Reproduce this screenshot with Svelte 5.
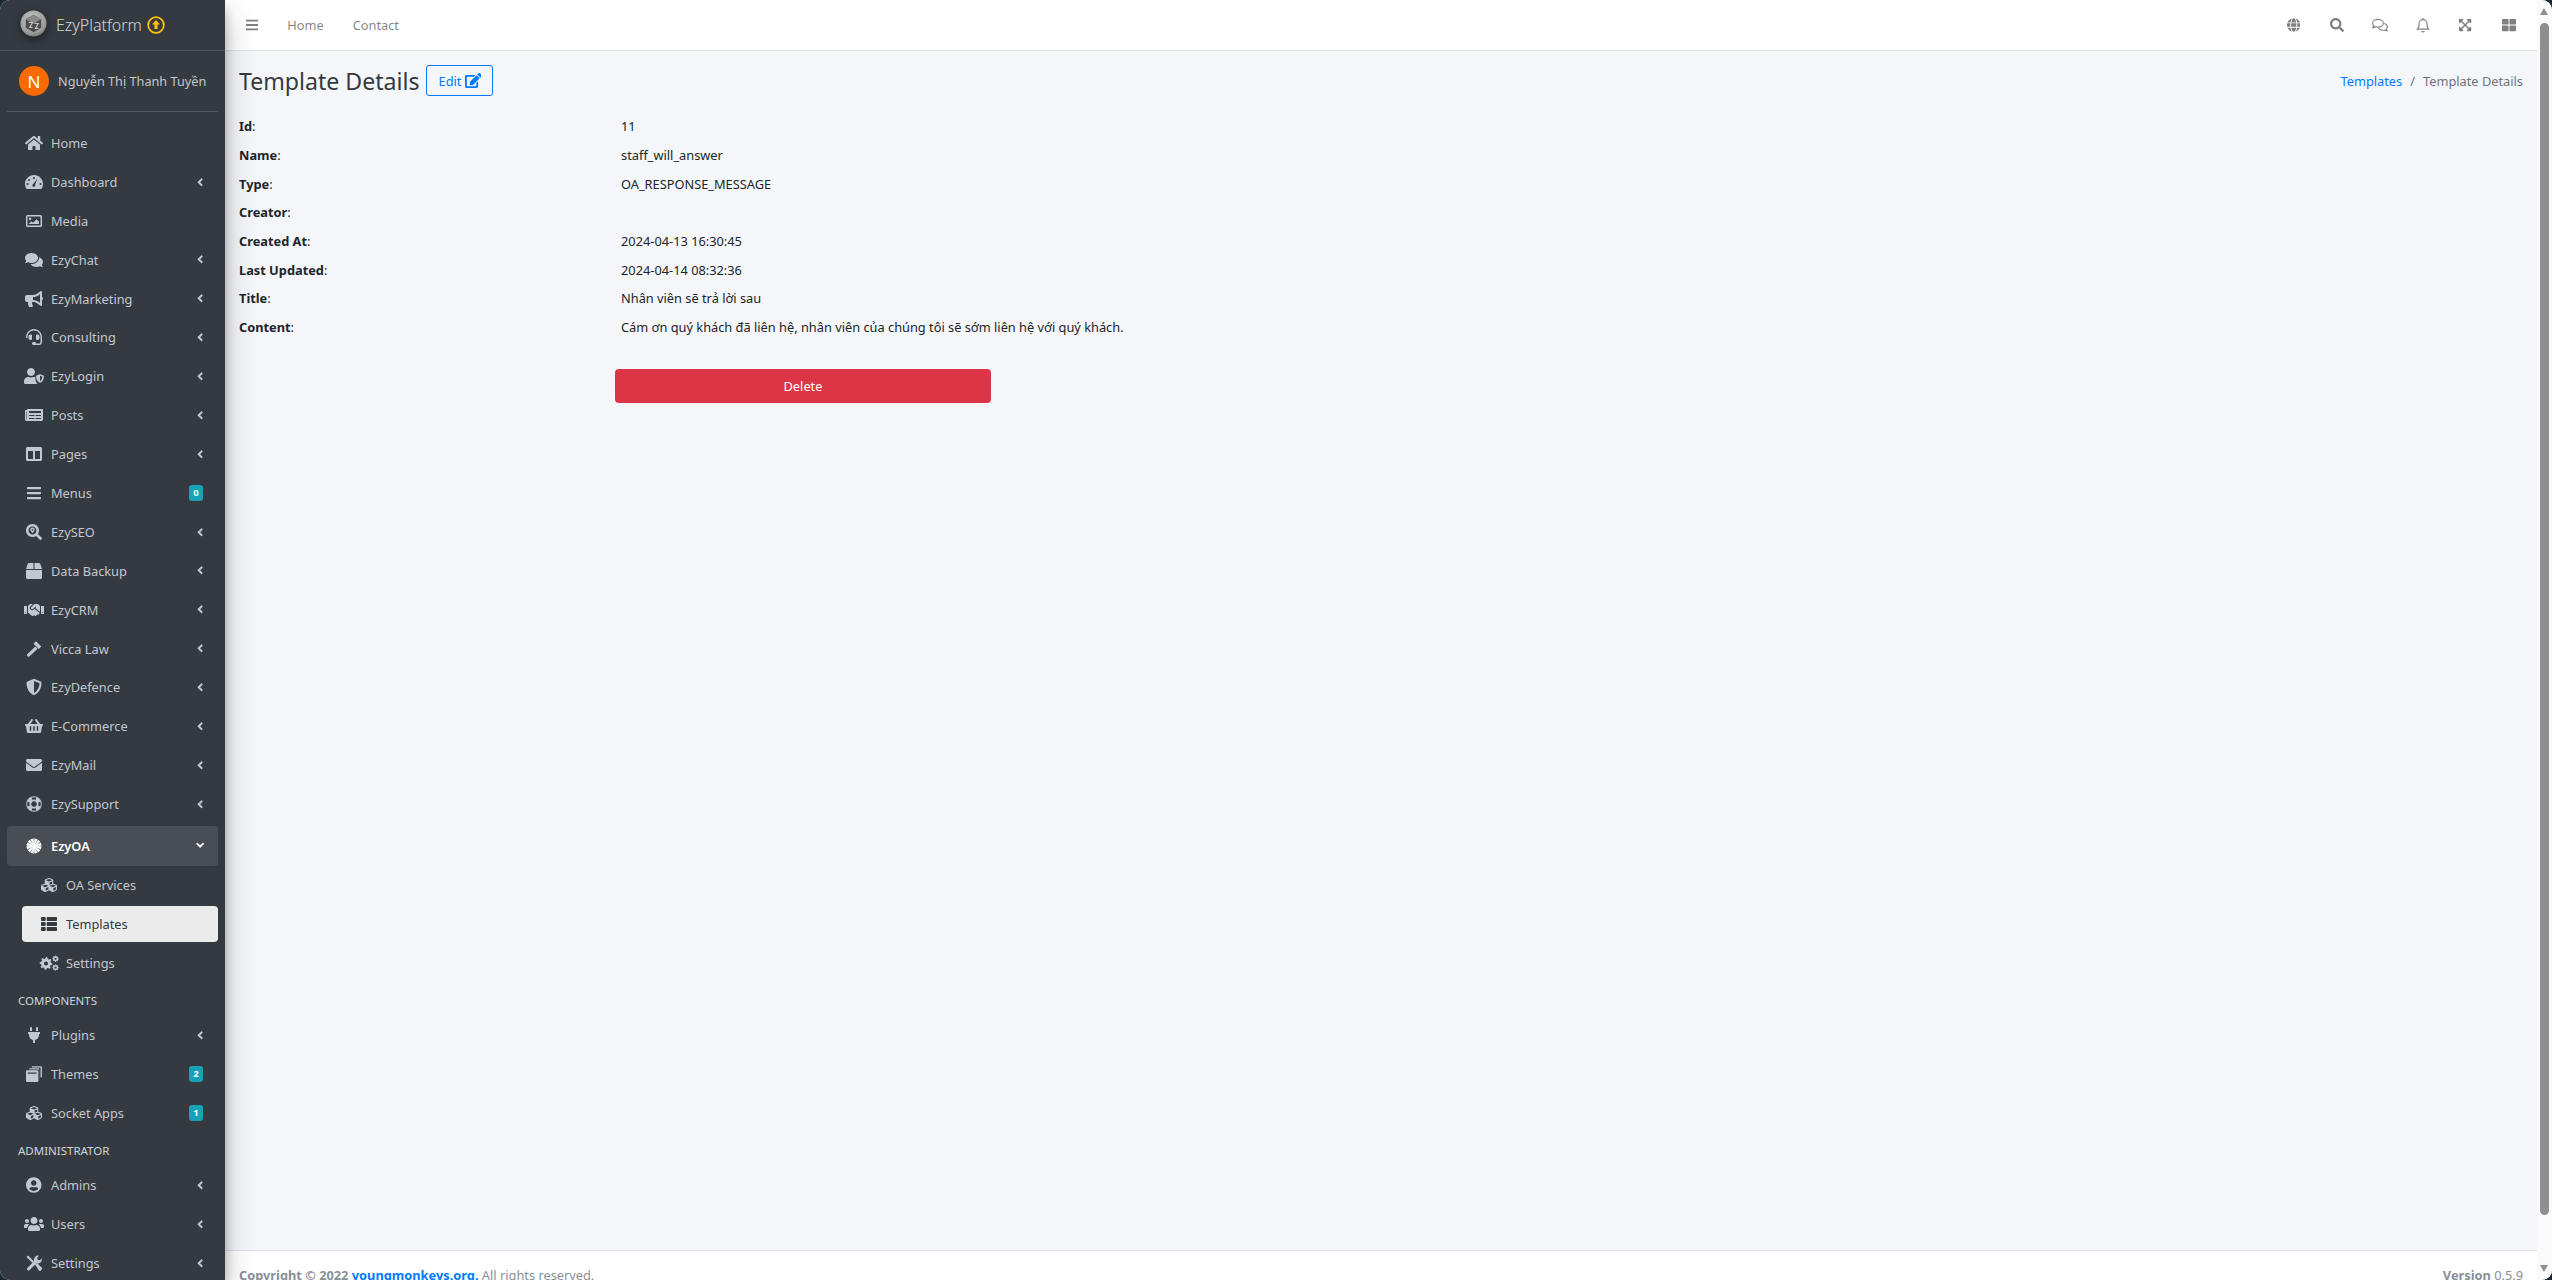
<script>
  // icon paths: [viewBox width, d, fill rule]
  function spokes() {
    let d = 'M256 16a240 240 0 1 0 .1 0z';
    for (let i = 0; i < 12; i++) {
      const a = (i * Math.PI) / 6;
      const p = (r, o) => `${(256 + r * Math.cos(a + o)).toFixed(1)} ${(256 + r * Math.sin(a + o)).toFixed(1)}`;
      d += `M${p(60, 0)}L${p(235, 0.05)}L${p(235, -0.05)}z`;
    }
    return d;
  }

  function gear(cx, cy, r, teeth) {
    const pts = [];
    for (let i = 0; i < teeth * 4; i++) {
      const a = (i * Math.PI * 2) / (teeth * 4);
      const rad = i % 4 < 2 ? r : r * 0.76;
      pts.push(`${(cx + rad * Math.cos(a)).toFixed(1)} ${(cy + rad * Math.sin(a)).toFixed(1)}`);
    }
    const h = r * 0.32;
    return `M${pts.join('L')}zM${cx} ${cy - h}a${h} ${h} 0 1 0 .1 0z`;
  }

  const solid = {
    home: [576, 'M280.37 148.26L96 300.11V464a16 16 0 0 0 16 16l112.06-.29a16 16 0 0 0 15.92-16V368a16 16 0 0 1 16-16h64a16 16 0 0 1 16 16v95.64a16 16 0 0 0 16 16.05L464 480a16 16 0 0 0 16-16V300L295.67 148.26a12.19 12.19 0 0 0-15.3 0zM571.6 251.47L488 182.56V44.05a12 12 0 0 0-12-12h-56a12 12 0 0 0-12 12v72.61L318.47 43a48 48 0 0 0-61 0L4.34 251.47a12 12 0 0 0-1.6 16.9l25.5 31A12 12 0 0 0 45.15 301l235.22-193.74a12.19 12.19 0 0 1 15.3 0L530.9 301a12 12 0 0 0 16.9-1.6l25.5-31a12 12 0 0 0-1.7-16.93z'],
    gauge: [576, 'M288 32C129 32 0 161 0 320c0 53 14 102 40 144 6 9 16 16 28 16h440c12 0 22-7 28-16 26-42 40-91 40-144 0-159-129-288-288-288zM288 96a32 32 0 1 0 .1 0zM128 160a32 32 0 1 0 .1 0zM80 288a32 32 0 1 0 .1 0zM496 288a32 32 0 1 0 .1 0zM400 140l-76 196a48 48 0 1 1-62-18z'],
    image: [512, 'M48 64h416a48 48 0 0 1 48 48v288a48 48 0 0 1-48 48H48a48 48 0 0 1-48-48V112a48 48 0 0 1 48-48zM48 112v288h416V112zM128 144a40 40 0 1 0 .1 0zM96 352h320v-72l-80-80-112 112-48-48-80 72z'],
    comments: [576, 'M416 192c0-88.4-93.1-160-208-160S0 103.6 0 192c0 34.3 14.1 65.9 38 92-13.4 30.2-35.5 54.2-35.8 54.5-2.2 2.3-2.8 5.7-1.5 8.7S4.8 352 8 352c36.6 0 66.9-12.3 88.7-25 32.2 15.7 70.3 25 111.3 25 114.9 0 208-71.6 208-160zm122 220c23.9-26 38-57.7 38-92 0-66.9-53.5-124.2-129.3-148.1.9 6.6 1.3 13.3 1.3 20.1 0 105.9-107.7 192-240 192-10.8 0-21.3-.8-31.7-1.9C207.8 439.6 281.8 480 368 480c41 0 79.1-9.2 111.3-25 21.8 12.7 52.1 25 88.7 25 3.2 0 6.1-1.9 7.3-4.8 1.3-2.9.7-6.3-1.5-8.7-.3-.3-22.4-24.2-35.8-54.5z'],
    bullhorn: [576, 'M576 240c0-23.63-12.95-44.04-32-55.12V32.01C544 23.26 537.02 0 512 0c-7.12 0-14.19 2.38-19.98 7.02l-85.03 68.03C364.28 109.19 310.66 128 256 128H64c-35.35 0-64 28.65-64 64v96c0 35.35 28.65 64 64 64h33.7c-1.39 10.48-2.18 21.14-2.18 32 0 39.77 9.26 77.35 25.56 110.94 5.19 10.69 16.52 17.06 28.4 17.06h74.28c26.05 0 41.69-29.84 25.9-50.56-16.4-21.52-26.15-48.36-26.15-77.44 0-11.11 1.62-21.79 4.41-32H256c54.66 0 108.28 18.81 150.98 52.95l85.03 68.03a32.023 32.023 0 0 0 19.98 7.02c24.92 0 32-22.78 32-32V295.13C563.05 284.04 576 263.63 576 240zm-96 141.42l-33.05-26.44C392.95 311.78 325.12 288 256 288v-96c69.12 0 136.95-23.78 190.95-66.98L480 98.58v282.84z'],
    headset: [512, 'M192 208c0-17.67-14.33-32-32-32h-16c-35.35 0-64 28.65-64 64v48c0 35.35 28.65 64 64 64h16c17.67 0 32-14.33 32-32V208zm176 144c35.35 0 64-28.65 64-64v-48c0-35.35-28.65-64-64-64h-16c-17.67 0-32 14.33-32 32v112c0 17.67 14.33 32 32 32h16zM256 0C113.18 0 4.58 118.83 0 256v16c0 8.84 7.16 16 16 16h16c8.84 0 16-7.16 16-16v-16c0-114.69 93.31-208 208-208s208 93.31 208 208h-.12c.08 2.43.12 165.72.12 165.72 0 23.35-18.93 42.28-42.28 42.28H320c0-26.51-21.49-48-48-48h-32c-26.51 0-48 21.49-48 48s21.49 48 48 48h181.72c49.86 0 90.28-40.42 90.28-90.28V256C507.42 118.83 398.82 0 256 0z'],
    userShield: [640, 'M224 0a128 128 0 1 0 .1 0zM313.6 288h-16.7c-22.2 10.2-46.9 16-72.9 16s-50.6-5.8-72.9-16h-16.7C60.2 288 0 348.2 0 422.4V464c0 26.5 21.5 48 48 48h352c10 0 19-3 27-9-40-40-59-100-59-160v-45c-17-6-35-10-54.4-10zM623 238l-105-41c-3.9-1.5-8.2-1.5-12 0l-105 41c-10.7 4.2-17 13.8-17 24.4 0 111 68 188 122 213 4 1.6 8 1.6 12 0 51-20 122-89 122-213 0-10.6-6.3-20.2-17-24.4zM512 423V244l72 28c-3 80-40 130-72 151z'],
    newspaper: [576, 'M552 64H88c-13.255 0-24 10.745-24 24v8H24c-13.255 0-24 10.745-24 24v272c0 30.928 25.072 56 56 56h472c26.51 0 48-21.49 48-48V88c0-13.255-10.745-24-24-24zM56 400a8 8 0 0 1-8-8V144h16v248a8 8 0 0 1-8 8zm236-16H140c-6.627 0-12-5.373-12-12v-8c0-6.627 5.373-12 12-12h152c6.627 0 12 5.373 12 12v8c0 6.627-5.373 12-12 12zm208 0H348c-6.627 0-12-5.373-12-12v-8c0-6.627 5.373-12 12-12h152c6.627 0 12 5.373 12 12v8c0 6.627-5.373 12-12 12zm-208-96H140c-6.627 0-12-5.373-12-12v-8c0-6.627 5.373-12 12-12h152c6.627 0 12 5.373 12 12v8c0 6.627-5.373 12-12 12zm208 0H348c-6.627 0-12-5.373-12-12v-8c0-6.627 5.373-12 12-12h152c6.627 0 12 5.373 12 12v8c0 6.627-5.373 12-12 12zm0-96H140c-6.627 0-12-5.373-12-12v-40c0-6.627 5.373-12 12-12h360c6.627 0 12 5.373 12 12v40c0 6.627-5.373 12-12 12z'],
    columns: [512, 'M464 32H48C21.49 32 0 53.49 0 80v352c0 26.51 21.49 48 48 48h416c26.51 0 48-21.49 48-48V80c0-26.51-21.49-48-48-48zM224 416H64V160h160v256zm224 0H288V160h160v256z'],
    bars: [448, 'M16 132h416c8.837 0 16-7.163 16-16V76c0-8.837-7.163-16-16-16H16C7.163 60 0 67.163 0 76v40c0 8.837 7.163 16 16 16zm0 160h416c8.837 0 16-7.163 16-16v-40c0-8.837-7.163-16-16-16H16c-8.837 0-16 7.163-16 16v40c0 8.837 7.163 16 16 16zm0 160h416c8.837 0 16-7.163 16-16v-40c0-8.837-7.163-16-16-16H16c-8.837 0-16 7.163-16 16v40c0 8.837 7.163 16 16 16z'],
    searchPin: [512, 'M505 442.7L405.3 343c-4.5-4.5-10.6-7-17-7H372c27.6-35.3 44-79.7 44-128C416 93.1 322.9 0 208 0S0 93.1 0 208s93.1 208 208 208c48.3 0 92.7-16.4 128-44v16.3c0 6.4 2.5 12.5 7 17l99.7 99.7c9.4 9.4 24.6 9.4 33.9 0l28.3-28.3c9.4-9.4 9.4-24.6.1-34zM208 336c-70.7 0-128-57.2-128-128 0-70.7 57.2-128 128-128 70.7 0 128 57.2 128 128 0 70.7-57.2 128-128 128zM208 112c-40 0-72 32-72 72 0 40 72 104 72 104s72-64 72-104c0-40-32-72-72-72zM208 160a24 24 0 1 0 .1 0z'],
    box: [512, 'M509.5 184.6L458.9 32.8C452.4 13.2 434.1 0 413.4 0H272v192h238.7c-.4-2.5-.4-5-1.2-7.4zM240 0H98.6c-20.7 0-39 13.2-45.5 32.8L2.5 184.6c-.8 2.4-.8 4.9-1.2 7.4H240V0zM0 224v240c0 26.5 21.5 48 48 48h416c26.5 0 48-21.5 48-48V224H0z'],
    handshake: [640, 'M434.7 64h-85.9c-8 0-15.7 3-21.6 8.4l-98.3 90c-.1.1-.2.3-.3.4-16.6 15.6-16.3 40.5-2.1 56 12.7 13.9 39.4 17.6 56.1 2.7.1-.1.3-.1.4-.2l79.9-73.2c6.5-5.9 16.7-5.5 22.6 1 6 6.5 5.5 16.6-1 22.6l-26.1 23.9L504 313.8c2.9 2.4 5.5 5 7.9 7.7V128l-54.6-54.6c-5.9-6-14.1-9.4-22.6-9.4zM544 128.2v223.9c0 17.7 14.3 32 32 32h64V128.2h-96zm48 223.9c-8.8 0-16-7.2-16-16s7.2-16 16-16 16 7.2 16 16-7.2 16-16 16zM0 384h64c17.7 0 32-14.3 32-32V128.2H0V384zm48-63.9c8.8 0 16 7.2 16 16s-7.2 16-16 16-16-7.2-16-16c0-8.9 7.2-16 16-16zm435.9 18.6L334.6 217.5l-30 27.5c-29.7 27.1-75.2 24.5-101.7-4.4-26.9-29.4-24.8-74.9 4.4-101.7L289.1 64h-83.8c-8.5 0-16.6 3.4-22.6 9.4L128 128v223.9h18.3l90.5 81.9c27.4 22.3 67.7 18.1 90-9.3l.2-.2 17.9 15.5c15.9 13 39.4 10.5 52.3-5.4l31.4-38.6 5.4 4.4c13.7 11.1 33.9 9.1 45-4.7l9.5-11.7c11.2-13.8 9.1-33.9-4.6-45.1z'],
    gavel: [512, 'M318 6L490 178 412 256 240 84zM296 172L372 248 122 482a50 50 0 0 1-74-70z', 'nonzero'],
    shield: [512, 'M466.5 83.7l-192-80a48.15 48.15 0 0 0-36.9 0l-192 80C27.7 91.1 16 108.6 16 128c0 198.5 114.5 335.7 221.5 380.3 11.8 4.9 25.1 4.9 36.9 0C360.1 472.6 496 349.3 496 128c0-19.4-11.7-36.9-29.5-44.3zM256.1 446.3l-.1-381 175.9 73.3c-3.3 151.4-82.1 261.1-175.8 307.7z'],
    basket: [576, 'M576 216v16c0 13.255-10.745 24-24 24h-8l-26.113 182.788C514.509 462.435 494.257 480 470.37 480H105.63c-23.887 0-44.139-17.565-47.518-41.212L32 256h-8c-13.255 0-24-10.745-24-24v-16c0-13.255 10.745-24 24-24h67.341l106.78-146.821c10.395-14.292 30.407-17.453 44.701-7.058 14.293 10.395 17.453 30.408 7.058 44.701L170.477 192h235.046L326.12 82.821c-10.395-14.292-7.234-34.306 7.059-44.701 14.291-10.395 34.306-7.235 44.701 7.058L484.659 192H552c13.255 0 24 10.745 24 24zM312 392V280c0-13.255-10.745-24-24-24s-24 10.745-24 24v112c0 13.255 10.745 24 24 24s24-10.745 24-24zm112 0V280c0-13.255-10.745-24-24-24s-24 10.745-24 24v112c0 13.255 10.745 24 24 24s24-10.745 24-24zm-224 0V280c0-13.255-10.745-24-24-24s-24 10.745-24 24v112c0 13.255 10.745 24 24 24s24-10.745 24-24z'],
    envelope: [512, 'M502.3 190.8c3.9-3.1 9.7-.2 9.7 4.7V400c0 26.5-21.5 48-48 48H48c-26.5 0-48-21.5-48-48V195.6c0-5 5.7-7.8 9.7-4.7 22.4 17.4 52.1 39.5 154.1 113.6 21.1 15.4 56.7 47.8 92.2 47.6 35.7.3 72-32.8 92.3-47.6 102-74.1 131.6-96.3 154-113.7zM256 320c23.2.4 56.6-29.2 73.4-41.4 132.7-96.3 142.8-104.7 173.4-128.7 5.8-4.5 9.2-11.5 9.2-18.9v-19c0-26.5-21.5-48-48-48H48C21.5 64 0 85.5 0 112v19c0 7.4 3.4 14.3 9.2 18.9 30.6 23.9 40.7 32.4 173.4 128.7 16.8 12.2 50.2 41.8 73.4 41.4z'],
    lifeRing: [512, 'M256 8a248 248 0 1 0 .1 0zM256 168a88 88 0 1 0 .1 0zM180 55a210 210 0 0 1 152 0l-25 65a140 140 0 0 0-102 0zM457 180a210 210 0 0 1 0 152l-65-25a140 140 0 0 0 0-102zM332 457a210 210 0 0 1-152 0l25-65a140 140 0 0 0 102 0zM55 332a210 210 0 0 1 0-152l65 25a140 140 0 0 0 0 102z'],
    burst: [512, spokes()],
    cubes: [512, 'M488.6 250.2L392 214V105.5c0-15-9.3-28.4-23.4-33.7l-100-37.5c-8.1-3.1-17.1-3.1-25.3 0l-100 37.5c-14.1 5.3-23.4 18.7-23.4 33.7V214l-96.6 36.2C9.3 255.5 0 268.9 0 283.9V394c0 13.6 7.7 26.1 19.9 32.2l100 50c10.1 5.1 22.1 5.1 32.2 0l103.9-52 103.9 52c10.1 5.1 22.1 5.1 32.2 0l100-50c12.2-6.1 19.9-18.6 19.9-32.2V283.9c0-15-9.3-28.4-23.4-33.7zM358 214.8l-85 31.9v-68.2l85-37v73.3zM154 104.1l102-38.2 102 38.2v.6l-102 41.4-102-41.4v-.6zm84 291.1l-85 42.5v-79.1l85-38.8v75.4zm0-112l-102 41.4-102-41.4v-.6l102-38.2 102 38.2v.6zm240 112l-85 42.5v-79.1l85-38.8v75.4zm0-112l-102 41.4-102-41.4v-.6l102-38.2 102 38.2v.6z'],
    list: [512, 'M149.333 216v80c0 13.255-10.745 24-24 24H24c-13.255 0-24-10.745-24-24v-80c0-13.255 10.745-24 24-24h101.333c13.255 0 24 10.745 24 24zM0 376v80c0 13.255 10.745 24 24 24h101.333c13.255 0 24-10.745 24-24v-80c0-13.255-10.745-24-24-24H24c-13.255 0-24 10.745-24 24zM125.333 32H24C10.745 32 0 42.745 0 56v80c0 13.255 10.745 24 24 24h101.333c13.255 0 24-10.745 24-24V56c0-13.255-10.745-24-24-24zm80 448H488c13.255 0 24-10.745 24-24v-80c0-13.255-10.745-24-24-24H205.333c-13.255 0-24 10.745-24 24v80c0 13.255 10.745 24 24 24zm-24-424v80c0 13.255 10.745 24 24 24H488c13.255 0 24-10.745 24-24V56c0-13.255-10.745-24-24-24H205.333c-13.255 0-24 10.745-24 24zm24 264H488c13.255 0 24-10.745 24-24v-80c0-13.255-10.745-24-24-24H205.333c-13.255 0-24 10.745-24 24v80c0 13.255 10.745 24 24 24z'],
    cogs: [640, gear(225, 270, 205, 8) + gear(530, 120, 105, 8) + gear(530, 400, 105, 8)],
    plug: [384, 'M320 32a32 32 0 0 0-64 0v96h64zm48 128H16A16 16 0 0 0 0 176v32a16 16 0 0 0 16 16h16v32A160.07 160.07 0 0 0 160 412.8V512h64v-99.2A160.07 160.07 0 0 0 352 256v-32h16a16 16 0 0 0 16-16v-32a16 16 0 0 0-16-16zM128 32a32 32 0 0 0-64 0v96h64z'],
    book: [512, 'M40 136h316a40 40 0 0 1 40 40v296a40 40 0 0 1-40 40H40a40 40 0 0 1-40-40V176a40 40 0 0 1 40-40zM56 208v40h284v-40zM110 72h310v368h-4V112H110zM190 8h280a40 40 0 0 1 40 40v310h-44V48H190z'],
    userCircle: [496, 'M248 8C111 8 0 119 0 256s111 248 248 248 248-111 248-248S385 8 248 8zm0 96c48.6 0 88 39.4 88 88s-39.4 88-88 88-88-39.4-88-88 39.4-88 88-88zm0 344c-58.7 0-111.3-26.6-146.5-68.2 18.8-35.4 55.6-59.8 98.5-59.8 2.4 0 4.8.4 7.1 1.1 13 4.2 26.6 6.9 40.9 6.9 14.3 0 28-2.7 40.9-6.9 2.3-.7 4.7-1.1 7.1-1.1 42.9 0 79.7 24.4 98.5 59.8C359.3 421.4 306.7 448 248 448z'],
    users: [640, 'M96 224c35.3 0 64-28.7 64-64s-28.7-64-64-64-64 28.7-64 64 28.7 64 64 64zm448 0c35.3 0 64-28.7 64-64s-28.7-64-64-64-64 28.7-64 64 28.7 64 64 64zm32 32h-64c-17.6 0-33.5 7.1-45.1 18.6 40.3 22.1 68.9 62 75.1 109.4h66c17.7 0 32-14.3 32-32v-32c0-35.3-28.7-64-64-64zm-256 0c61.9 0 112-50.1 112-112S381.9 32 320 32 208 82.1 208 144s50.1 112 112 112zm76.8 32h-8.3c-20.8 10-43.9 16-68.5 16s-47.6-6-68.5-16h-8.3C179.6 288 128 339.6 128 403.2V432c0 26.5 21.5 48 48 48h288c26.5 0 48-21.5 48-48v-28.8c0-63.6-51.6-115.2-115.2-115.2zm-223.7-13.4C161.5 263.1 145.6 256 128 256H64c-35.3 0-64 28.7-64 64v32c0 17.7 14.3 32 32 32h65.9c6.3-47.4 34.9-87.3 75.2-109.4z'],
    tools: [512, 'M14 64L64 14 250 196 200 250zM290 300L344 246 498 402a50 50 0 0 1-2 70l-20 20a50 50 0 0 1-70-2zM500 108l-62 62-66-16-16-66 62-62a128 128 0 0 0-156 168L42 414a50 50 0 0 0 70 70l220-220a128 128 0 0 0 168-156z', 'nonzero'],
    globe: [496, 'M336.5 160C322 70.7 287.8 8 248 8s-74 62.7-88.5 152h177zM152 256c0 22.2 1.2 43.5 3.3 64h185.3c2.1-20.5 3.3-41.8 3.3-64s-1.2-43.5-3.3-64H155.3c-2.1 20.5-3.3 41.8-3.3 64zm324.7-96c-28.6-67.9-86.5-120.4-158-141.6 24.4 33.8 41.2 84.7 50 141.6h108zM177.2 18.4C105.8 39.6 47.8 92.1 19.3 160h108c8.7-56.9 25.5-107.8 49.9-141.6zM487.4 192H372.7c2.1 21 3.3 42.5 3.3 64s-1.2 43-3.3 64h114.6c5.5-20.5 8.6-41.8 8.6-64s-3.1-43.5-8.5-64zM120 256c0-21.5 1.2-43 3.3-64H8.6C3.2 212.5 0 233.8 0 256s3.2 43.5 8.6 64h114.6c-2-21-3.2-42.5-3.2-64zm39.5 96c14.5 89.3 48.7 152 88.5 152s74-62.7 88.5-152h-177zm159.3 141.6c71.4-21.2 129.4-73.7 158-141.6h-108c-8.8 56.9-25.6 107.8-50 141.6zM19.3 352c28.6 67.9 86.5 120.4 158 141.6-24.4-33.8-41.2-84.7-50-141.6h-108z'],
    search: [512, 'M505 442.7L405.3 343c-4.5-4.5-10.6-7-17-7H372c27.6-35.3 44-79.7 44-128C416 93.1 322.9 0 208 0S0 93.1 0 208s93.1 208 208 208c48.3 0 92.7-16.4 128-44v16.3c0 6.4 2.5 12.5 7 17l99.7 99.7c9.4 9.4 24.6 9.4 33.9 0l28.3-28.3c9.4-9.4 9.4-24.6.1-34zM208 336c-70.7 0-128-57.2-128-128 0-70.7 57.2-128 128-128 70.7 0 128 57.2 128 128 0 70.7-57.2 128-128 128z'],
    expand: [448, 'M448 344v112a23.94 23.94 0 0 1-24 24H312c-21.39 0-32.09-25.9-17-41l36.2-36.2L224 295.6 116.77 402.9 153 439c15.09 15.1 4.39 41-17 41H24a23.94 23.94 0 0 1-24-24V344c0-21.4 25.89-32.1 41-17l36.19 36.2L184.46 256 77.18 148.7 41 185c-15.1 15.1-41 4.4-41-17V56a23.94 23.94 0 0 1 24-24h112c21.39 0 32.09 25.9 17 41l-36.2 36.2L224 216.4l107.23-107.3L295 73c-15.09-15.1-4.39-41 17-41h112a23.94 23.94 0 0 1 24 24v112c0 21.4-25.89 32.1-41 17l-36.19-36.2L263.54 256l107.28 107.3L407 327.1c15.1-15.2 41-4.5 41 16.9z', 'nonzero'],
    grid: [512, 'M296 32h192c13.255 0 24 10.745 24 24v160c0 13.255-10.745 24-24 24H296c-13.255 0-24-10.745-24-24V56c0-13.255 10.745-24 24-24zm-80 0H24C10.745 32 0 42.745 0 56v160c0 13.255 10.745 24 24 24h192c13.255 0 24-10.745 24-24V56c0-13.255-10.745-24-24-24zM0 296v160c0 13.255 10.745 24 24 24h192c13.255 0 24-10.745 24-24V296c0-13.255-10.745-24-24-24H24c-13.255 0-24 10.745-24 24zm296 184h192c13.255 0 24-10.745 24-24V296c0-13.255-10.745-24-24-24H296c-13.255 0-24 10.745-24 24v160c0 13.255 10.745 24 24 24z'],
    edit: [576, 'M402.6 83.2l90.2 90.2c3.8 3.8 3.8 10 0 13.8L274.4 405.6l-92.8 10.3c-12.4 1.4-22.9-9.1-21.5-21.5l10.3-92.8L388.8 83.2c3.8-3.8 10-3.8 13.8 0zm162-22.9l-48.8-48.8c-15.2-15.2-39.9-15.2-55.2 0l-35.4 35.4c-3.8 3.8-3.8 10 0 13.8l90.2 90.2c3.8 3.8 10 3.8 13.8 0l35.4-35.4c15.2-15.3 15.2-40 0-55.2zM384 346.2V448H64V128h229.8c3.2 0 6.2-1.3 8.5-3.5l40-40c7.6-7.6 2.2-20.5-8.5-20.5H48C21.5 64 0 85.5 0 112v352c0 26.5 21.5 48 48 48h352c26.5 0 48-21.5 48-48V306.2c0-10.7-12.9-16-20.5-8.5l-40 40c-2.2 2.3-3.5 5.3-3.5 8.5z', 'nonzero'],
    angle: [256, 'M31.7 239l136-136c9.4-9.4 24.6-9.4 33.9 0l22.6 22.6c9.4 9.4 9.4 24.6 0 33.9L127.9 256l96.4 96.4c9.4 9.4 9.4 24.6 0 33.9L201.7 409c-9.4 9.4-24.6 9.4-33.9 0l-136-136c-9.5-9.4-9.5-24.6-.1-34z'],
  };

  const mainItems = [
    { label: 'Home', icon: 'home' },
    { label: 'Dashboard', icon: 'gauge', more: true },
    { label: 'Media', icon: 'image' },
    { label: 'EzyChat', icon: 'comments', more: true },
    { label: 'EzyMarketing', icon: 'bullhorn', more: true },
    { label: 'Consulting', icon: 'headset', more: true },
    { label: 'EzyLogin', icon: 'userShield', more: true },
    { label: 'Posts', icon: 'newspaper', more: true },
    { label: 'Pages', icon: 'columns', more: true },
    { label: 'Menus', icon: 'bars', badge: 0 },
    { label: 'EzySEO', icon: 'searchPin', more: true },
    { label: 'Data Backup', icon: 'box', more: true },
    { label: 'EzyCRM', icon: 'handshake', more: true },
    { label: 'Vicca Law', icon: 'gavel', more: true },
    { label: 'EzyDefence', icon: 'shield', more: true },
    { label: 'E-Commerce', icon: 'basket', more: true },
    { label: 'EzyMail', icon: 'envelope', more: true },
    { label: 'EzySupport', icon: 'lifeRing', more: true },
  ];

  const oaItems = [
    { label: 'OA Services', icon: 'cubes' },
    { label: 'Templates', icon: 'list', selected: true },
    { label: 'Settings', icon: 'cogs' },
  ];

  const componentItems = [
    { label: 'Plugins', icon: 'plug', more: true },
    { label: 'Themes', icon: 'book', badge: 2 },
    { label: 'Socket Apps', icon: 'cubes', badge: 1 },
  ];

  const adminItems = [
    { label: 'Admins', icon: 'userCircle', more: true },
    { label: 'Users', icon: 'users', more: true },
    { label: 'Settings', icon: 'tools', more: true },
  ];

  const details = [
    ['Id', '11'],
    ['Name', 'staff_will_answer'],
    ['Type', 'OA_RESPONSE_MESSAGE'],
    ['Creator', ''],
    ['Created At', '2024-04-13 16:30:45'],
    ['Last Updated', '2024-04-14 08:32:36'],
    ['Title', 'Nhân viên sẽ trả lời sau'],
    ['Content', 'Cám ơn quý khách đã liên hệ, nhân viên của chúng tôi sẽ sớm liên hệ với quý khách.'],
  ];
</script>

{#snippet icon(name, cls = '')}
  <svg class="fa {cls}" viewBox="0 0 {solid[name][0]} 512" aria-hidden="true">
    <path d={solid[name][1]} fill-rule={solid[name][2] || 'evenodd'} />
  </svg>
{/snippet}

{#snippet navItem(item, sub = false)}
  <li class="item">
    <a class="link" class:sub class:selected={item.selected} href="#top">
      <span class="nav-icon">{@render icon(item.icon)}</span>
      <span class="nav-label">{item.label}</span>
      {#if item.more}
        {@render icon('angle', 'chev')}
      {:else if item.badge !== undefined}
        <span class="badge">{item.badge}</span>
      {/if}
    </a>
  </li>
{/snippet}

<div class="frame">
  <aside class="sidebar">
    <div class="brand">
      <svg class="logo" viewBox="0 0 28 28" aria-hidden="true">
        <defs>
          <radialGradient id="sphere" cx="45%" cy="35%" r="70%">
            <stop offset="0" stop-color="#c9c9c9" />
            <stop offset="0.75" stop-color="#9a9a9a" />
            <stop offset="1" stop-color="#6f6f6f" />
          </radialGradient>
        </defs>
        <circle cx="14" cy="14" r="13.5" fill="url(#sphere)" />
        <path d="M14 5l8 4.5v9L14 23l-8-4.5v-9z" fill="#4b4b4b" />
        <path d="M14 5l8 4.5-8 4.5-8-4.5z" fill="#8a8a8a" />
        <path d="M9 13h4l-3 5h3M15 14h4l-3 5h3" fill="none" stroke="#c4c4c4" stroke-width="1.2" />
      </svg>
      <span class="brand-text">EzyPlatform</span>
      <svg class="upgrade" viewBox="0 0 18 18" aria-hidden="true">
        <circle cx="9" cy="9" r="7.8" fill="none" stroke="#ffc107" stroke-width="1.8" />
        <path d="M9 4l4 4.4h-2.4V13H7.400V8.400H5z" fill="#ffc107" />
      </svg>
    </div>

    <div class="user-panel">
      <span class="avatar">N</span>
      <span class="user-name">Nguyễn Thị Thanh Tuyền</span>
    </div>

    <ul class="nav">
      {#each mainItems as item}
        {@render navItem(item)}
      {/each}

      <li class="open-item">
        <a class="link active" href="#top">
          <span class="nav-icon">{@render icon('burst')}</span>
          <span class="nav-label">EzyOA</span>
          {@render icon('angle', 'chev down')}
        </a>
      </li>
      {#each oaItems as item}
        {@render navItem(item, true)}
      {/each}

      <li class="nav-header">COMPONENTS</li>
      {#each componentItems as item}
        {@render navItem(item)}
      {/each}

      <li class="nav-header">ADMINISTRATOR</li>
      {#each adminItems as item}
        {@render navItem(item)}
      {/each}
    </ul>
  </aside>

  <div class="page">
    <header class="topbar">
      <a class="bars" href="#top" aria-label="Menu">{@render icon('bars')}</a>
      <a class="top-link" href="#top">Home</a>
      <a class="top-link" href="#top">Contact</a>

      <div class="top-actions">
        <span class="action">{@render icon('globe')}</span>
        <span class="action">{@render icon('search')}</span>
        <span class="action">
          <svg class="outline" viewBox="0 0 24 24" aria-hidden="true">
            <path d="M9 3.500c-4.400 0-8 2.600-8 5.800 0 1.500.8 2.900 2 3.900-.4 1.100-1.100 2-2 2.800 2 0 3.600-.7 4.600-1.400.9.300 2.100.5 3.400.5 4.400 0 8-2.600 8-5.800s-3.600-5.800-8-5.800z" />
            <path d="M18.500 9.800c2.800.7 4.500 2.600 4.500 4.900 0 1.400-.7 2.600-1.700 3.500.3 1 .9 1.700 1.700 2.500-1.800 0-3.200-.6-4.100-1.200-.9.200-1.900.4-2.900.4-2.800 0-5.200-1.200-6.200-3" />
          </svg>
        </span>
        <span class="action">
          <svg class="outline" viewBox="0 0 24 24" aria-hidden="true">
            <path d="M12 4c-3.500 0-6 2.500-6 6v3c0 2.200-1 3.600-2.500 5.200h17c-1.500-1.600-2.500-3-2.500-5.200v-3c0-3.500-2.500-6-6-6zM12 1.500V4M10 21a2.200 2.200 0 0 0 4 0" />
          </svg>
        </span>
        <span class="action">{@render icon('expand')}</span>
        <span class="action">{@render icon('grid')}</span>
      </div>
    </header>

    <main class="content">
      <div class="title-row">
        <div class="title-left">
          <h1>Template Details</h1>
          <a class="edit-btn" href="#top">Edit {@render icon('edit')}</a>
        </div>
        <nav class="crumbs">
          <a href="#top">Templates</a>
          <span class="sep">/</span>
          <span>Template Details</span>
        </nav>
      </div>

      <dl class="details">
        {#each details as [name, value]}
          <dt><b>{name}</b>:</dt>
          <dd>{value}</dd>
        {/each}
      </dl>

      <div class="actions">
        <button class="delete-btn" type="button">Delete</button>
      </div>
    </main>

    <footer class="footer">
      <span><b>Copyright © 2022 <a href="#top">youngmonkeys.org.</a></b> All rights reserved.</span>
      <span><b>Version</b> 0.5.9</span>
    </footer>
  </div>

  <div class="scrollbar" aria-hidden="true">
    <span class="arrow up"></span>
    <span class="thumb"></span>
    <span class="arrow dn"></span>
  </div>
</div>

<style>
  :global(body) {
    margin: 0;
    background: #1c2733;
    overflow: hidden;
  }

  .frame {
    display: flex;
    height: 1280px;
    overflow: hidden;
    border-radius: 10px;
    background: #f4f6f9;
    font-family: 'Noto Sans', 'Liberation Sans', sans-serif;
    font-size: 12.8px;
    color: #212529;
  }

  a {
    text-decoration: none;
    color: inherit;
  }

  .fa {
    display: block;
    height: 16px;
    fill: currentColor;
  }

  /* Sidebar */
  .sidebar {
    flex: 0 0 225px;
    position: relative;
    z-index: 5;
    background: #343a40;
    color: #c2c7d0;
    box-shadow: 0 14px 28px rgba(0, 0, 0, 0.25), 0 10px 10px rgba(0, 0, 0, 0.22);
  }

  .brand {
    display: flex;
    align-items: center;
    height: 50px;
    padding-left: 20px;
    border-bottom: 1px solid #4b545c;
  }

  .logo {
    width: 27px;
    height: 27px;
    margin-top: -3px;
    filter: drop-shadow(0 3px 4px rgba(0, 0, 0, 0.45));
  }

  .brand-text {
    margin-left: 9px;
    font-size: 16px;
    font-weight: 300;
    color: rgba(255, 255, 255, 0.8);
  }

  .upgrade {
    width: 18px;
    height: 18px;
    margin-left: 5px;
  }

  .user-panel {
    display: flex;
    align-items: center;
    height: 60px;
    margin: 0 7px;
    padding-left: 12px;
    border-bottom: 1px solid #4f5962;
  }

  .avatar {
    display: flex;
    align-items: center;
    justify-content: center;
    width: 30px;
    height: 30px;
    border-radius: 50%;
    background: #f96a00;
    color: #fff;
    font-size: 17px;
  }

  .user-name {
    margin-left: 9px;
    white-space: nowrap;
    font-size: 12.7px;
  }

  .nav {
    list-style: none;
    margin: 11.5px 0 0;
    padding: 0 7px;
  }

  .item {
    display: flex;
    align-items: center;
    height: 38.9px;
  }

  .link {
    display: flex;
    align-items: center;
    width: 100%;
    padding: 0 15px;
    box-sizing: border-box;
    border-radius: 4px;
  }

  .nav-icon {
    display: flex;
    justify-content: center;
    width: 24px;
  }

  .nav-label {
    flex: 1;
    margin-left: 5px;
  }

  .chev {
    height: 12.5px;
  }

  .chev.down {
    transform: rotate(-90deg);
    color: #fff;
  }

  .open-item {
    padding-top: 2px;
  }

  .link.active {
    height: 40px;
    background: rgba(255, 255, 255, 0.1);
    color: #fff;
    font-weight: 600;
  }

  .link.sub {
    margin-left: 15px;
    width: calc(100% - 15px);
  }

  .link.selected {
    height: 36px;
    margin-top: 1px;
    background: rgba(255, 255, 255, 0.9);
    color: #343a40;
  }

  .badge {
    display: flex;
    align-items: center;
    justify-content: center;
    width: 14px;
    height: 16px;
    border-radius: 3px;
    background: #17a2b8;
    color: #fff;
    font-size: 9.5px;
    font-weight: 700;
  }

  .nav-header {
    height: 29.4px;
    padding: 4px 0 0 11px;
    color: #d0d4db;
    font-size: 11.5px;
    line-height: 29px;
    white-space: nowrap;
  }

  /* Main page */
  .page {
    flex: 1;
    display: flex;
    flex-direction: column;
    min-width: 0;
    height: 1307px;
  }

  .topbar {
    display: flex;
    align-items: center;
    flex: 0 0 50px;
    background: #fff;
    border-bottom: 1px solid #dee2e6;
  }

  .bars {
    display: block;
    margin-left: 21px;
    color: rgba(0, 0, 0, 0.5);
  }

  .bars .fa {
    height: 14px;
  }

  .top-link {
    margin-left: 29px;
    color: rgba(0, 0, 0, 0.5);
  }

  .top-actions {
    display: flex;
    margin-left: auto;
    margin-right: 7px;
    color: rgba(0, 0, 0, 0.5);
  }

  .action {
    display: flex;
    align-items: center;
    justify-content: center;
    width: 43px;
    height: 20px;
  }

  .action .fa {
    height: 14px;
  }

  .outline {
    width: 16px;
    height: 16px;
    fill: none;
    stroke: currentColor;
    stroke-width: 1.7;
  }

  .content {
    flex: 1;
    padding: 14px 14px 0;
  }

  .title-row {
    display: flex;
    justify-content: space-between;
    align-items: center;
    height: 31px;
  }

  .title-left {
    display: flex;
    align-items: center;
  }

  h1 {
    margin: 0;
    font-size: 23.1px;
    font-weight: 400;
    color: #343a40;
    white-space: nowrap;
  }

  .edit-btn {
    display: flex;
    align-items: center;
    justify-content: center;
    gap: 3px;
    box-sizing: border-box;
    width: 67px;
    height: 31px;
    margin-left: 7px;
    border: 1px solid #007bff;
    border-radius: 3px;
    color: #007bff;
  }

  .edit-btn .fa {
    height: 15px;
  }

  .crumbs {
    display: flex;
    gap: 8px;
    color: #6c757d;
  }

  .crumbs a {
    color: #007bff;
  }

  .details {
    display: grid;
    grid-template-columns: 382px 1fr;
    grid-auto-rows: 28.7px;
    align-items: center;
    margin: 16px 0 0;
  }

  .details dt,
  .details dd {
    margin: 0;
  }

  .details b {
    font-weight: 700;
  }

  .actions {
    margin: 27.4px 0 0 376px;
  }

  .delete-btn {
    display: block;
    width: 376px;
    height: 34px;
    border: none;
    border-radius: 4px;
    background: #dc3545;
    color: #fff;
    font: inherit;
  }

  .footer {
    display: flex;
    justify-content: space-between;
    flex: 0 0 57px;
    box-sizing: border-box;
    padding: 15px 14px;
    background: #fff;
    border-top: 1px solid #dee2e6;
    color: #869099;
  }

  .footer a {
    color: #007bff;
  }

  /* Browser scrollbar */
  .scrollbar {
    position: relative;
    flex: 0 0 15px;
    background: #fafafa;
  }

  .thumb {
    position: absolute;
    top: 23px;
    bottom: 65px;
    left: 3px;
    width: 9px;
    border-radius: 5px;
    background: #8f8f8f;
  }

  .arrow {
    position: absolute;
    left: 3px;
    width: 0;
    height: 0;
    border-left: 4.5px solid transparent;
    border-right: 4.5px solid transparent;
  }

  .arrow.up {
    top: 8px;
    border-bottom: 7px solid #8f8f8f;
  }

  .arrow.dn {
    bottom: 8px;
    border-top: 7px solid #8f8f8f;
  }
</style>
